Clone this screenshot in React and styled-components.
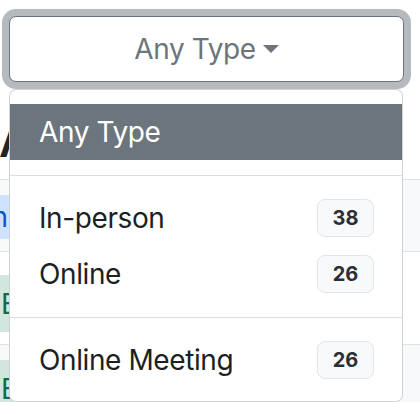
import React from "react";
import styled, { createGlobalStyle } from "styled-components";

const Global = createGlobalStyle`
  html, body { margin: 0; padding: 0; background: #fff; }
  body {
    font-family: Inter, "Noto Sans", "Liberation Sans", sans-serif;
    color: #212529;
    overflow: hidden;
  }
  * { box-sizing: border-box; }
`;

const Page = styled.div`
  width: 420px;
  height: 402px;
  overflow: hidden;
  padding-top: 16px;
`;

const Dropdown = styled.div`
  position: relative;
  width: 395px;
  margin-left: 9px;
  z-index: 2;
`;

const Toggle = styled.button`
  width: 100%;
  height: 66px;
  display: flex;
  align-items: center;
  justify-content: center;
  background: #fff;
  border: 1px solid #6c757d;
  border-radius: 7px;
  box-shadow: 0 0 0 7px rgba(108, 117, 125, 0.5);
  color: #6c757d;
  font-family: inherit;
  font-size: 28px;
  letter-spacing: -0.4px;
  line-height: 42px;
  padding: 0;
  &::after {
    content: "";
    display: inline-block;
    margin-left: 7px;
    border-top: 8px solid #6c757d;
    border-left: 8px solid transparent;
    border-right: 8px solid transparent;
  }
`;

const Menu = styled.div`
  position: absolute;
  top: 73px;
  left: 0;
  width: 394px;
  background: #fff;
  border: 1px solid rgba(0, 0, 0, 0.175);
  border-radius: 7px;
  padding: 14px 0 13px;
`;

const Item = styled.div`
  display: flex;
  align-items: center;
  justify-content: space-between;
  height: 56px;
  padding: 0 28px 0 29px;
  font-size: 28px;
  letter-spacing: -0.4px;
  background: ${(p) => (p.$active ? "#6c757d" : "transparent")};
  color: ${(p) => (p.$active ? "#fff" : "#1c1f23")};
`;

const Divider = styled.hr`
  margin: 15px 0 14px;
  border: 0;
  border-top: 1px solid #dcdee0;
`;

const Count = styled.span`
  display: inline-flex;
  align-items: center;
  justify-content: center;
  width: 57px;
  height: 38px;
  background: #f8f9fa;
  border: 1px solid #e2e4e7;
  border-radius: 8px;
  font-size: 20px;
  font-weight: 700;
  letter-spacing: 0;
  color: #2b2f33;
`;

const Heading = styled.h3`
  margin: 31px 0 0 -1px;
  font-size: 44px;
  line-height: 56px;
  font-weight: 600;
  color: #212529;
  white-space: nowrap;
`;

const Table = styled.div`
  margin-top: 10px;
  border-top: 1px solid #dee2e6;
`;

const Row = styled.div`
  display: flex;
  align-items: flex-start;
  height: ${(p) => p.$h}px;
  padding-top: ${(p) => p.$pad}px;
  background: ${(p) => (p.$striped ? "#f8f9fa" : "#fff")};
  border-bottom: 1px solid #dee2e6;
`;

const Tag = styled.span`
  display: inline-flex;
  align-items: center;
  height: ${(p) => p.$h}px;
  margin-left: ${(p) => p.$shift}px;
  padding: 0 12px;
  font-size: 28px;
  white-space: nowrap;
  background: ${(p) => (p.$tone === "blue" ? "#cfe2ff" : "#d1e7dd")};
  color: ${(p) => (p.$tone === "blue" ? "#0a58ca" : "#146c43")};
`;

const options = [
  { label: "In-person", count: 38 },
  { label: "Online", count: 26 },
];

export default function App() {
  return (
    <Page>
      <Global />
      <Dropdown>
        <Toggle type="button">Any Type</Toggle>
        <Menu>
          <Item $active>Any Type</Item>
          <Divider />
          {options.map((o) => (
            <Item key={o.label}>
              <span>{o.label}</span>
              <Count>{o.count}</Count>
            </Item>
          ))}
          <Divider />
          <Item>
            <span>Online Meeting</span>
            <Count>26</Count>
          </Item>
        </Menu>
      </Dropdown>
      <Heading>All Events</Heading>
      <Table>
        <Row $striped $h={72} $pad={15}>
          <Tag $tone="blue" $h={44} $shift={-28}>In-person</Tag>
        </Row>
        <Row $h={93} $pad={23}>
          <Tag $tone="green" $h={57} $shift={-11}>Event</Tag>
        </Row>
        <Row $striped $h={80} $pad={15}>
          <Tag $tone="green" $h={57} $shift={-11}>Event</Tag>
        </Row>
      </Table>
    </Page>
  );
}
